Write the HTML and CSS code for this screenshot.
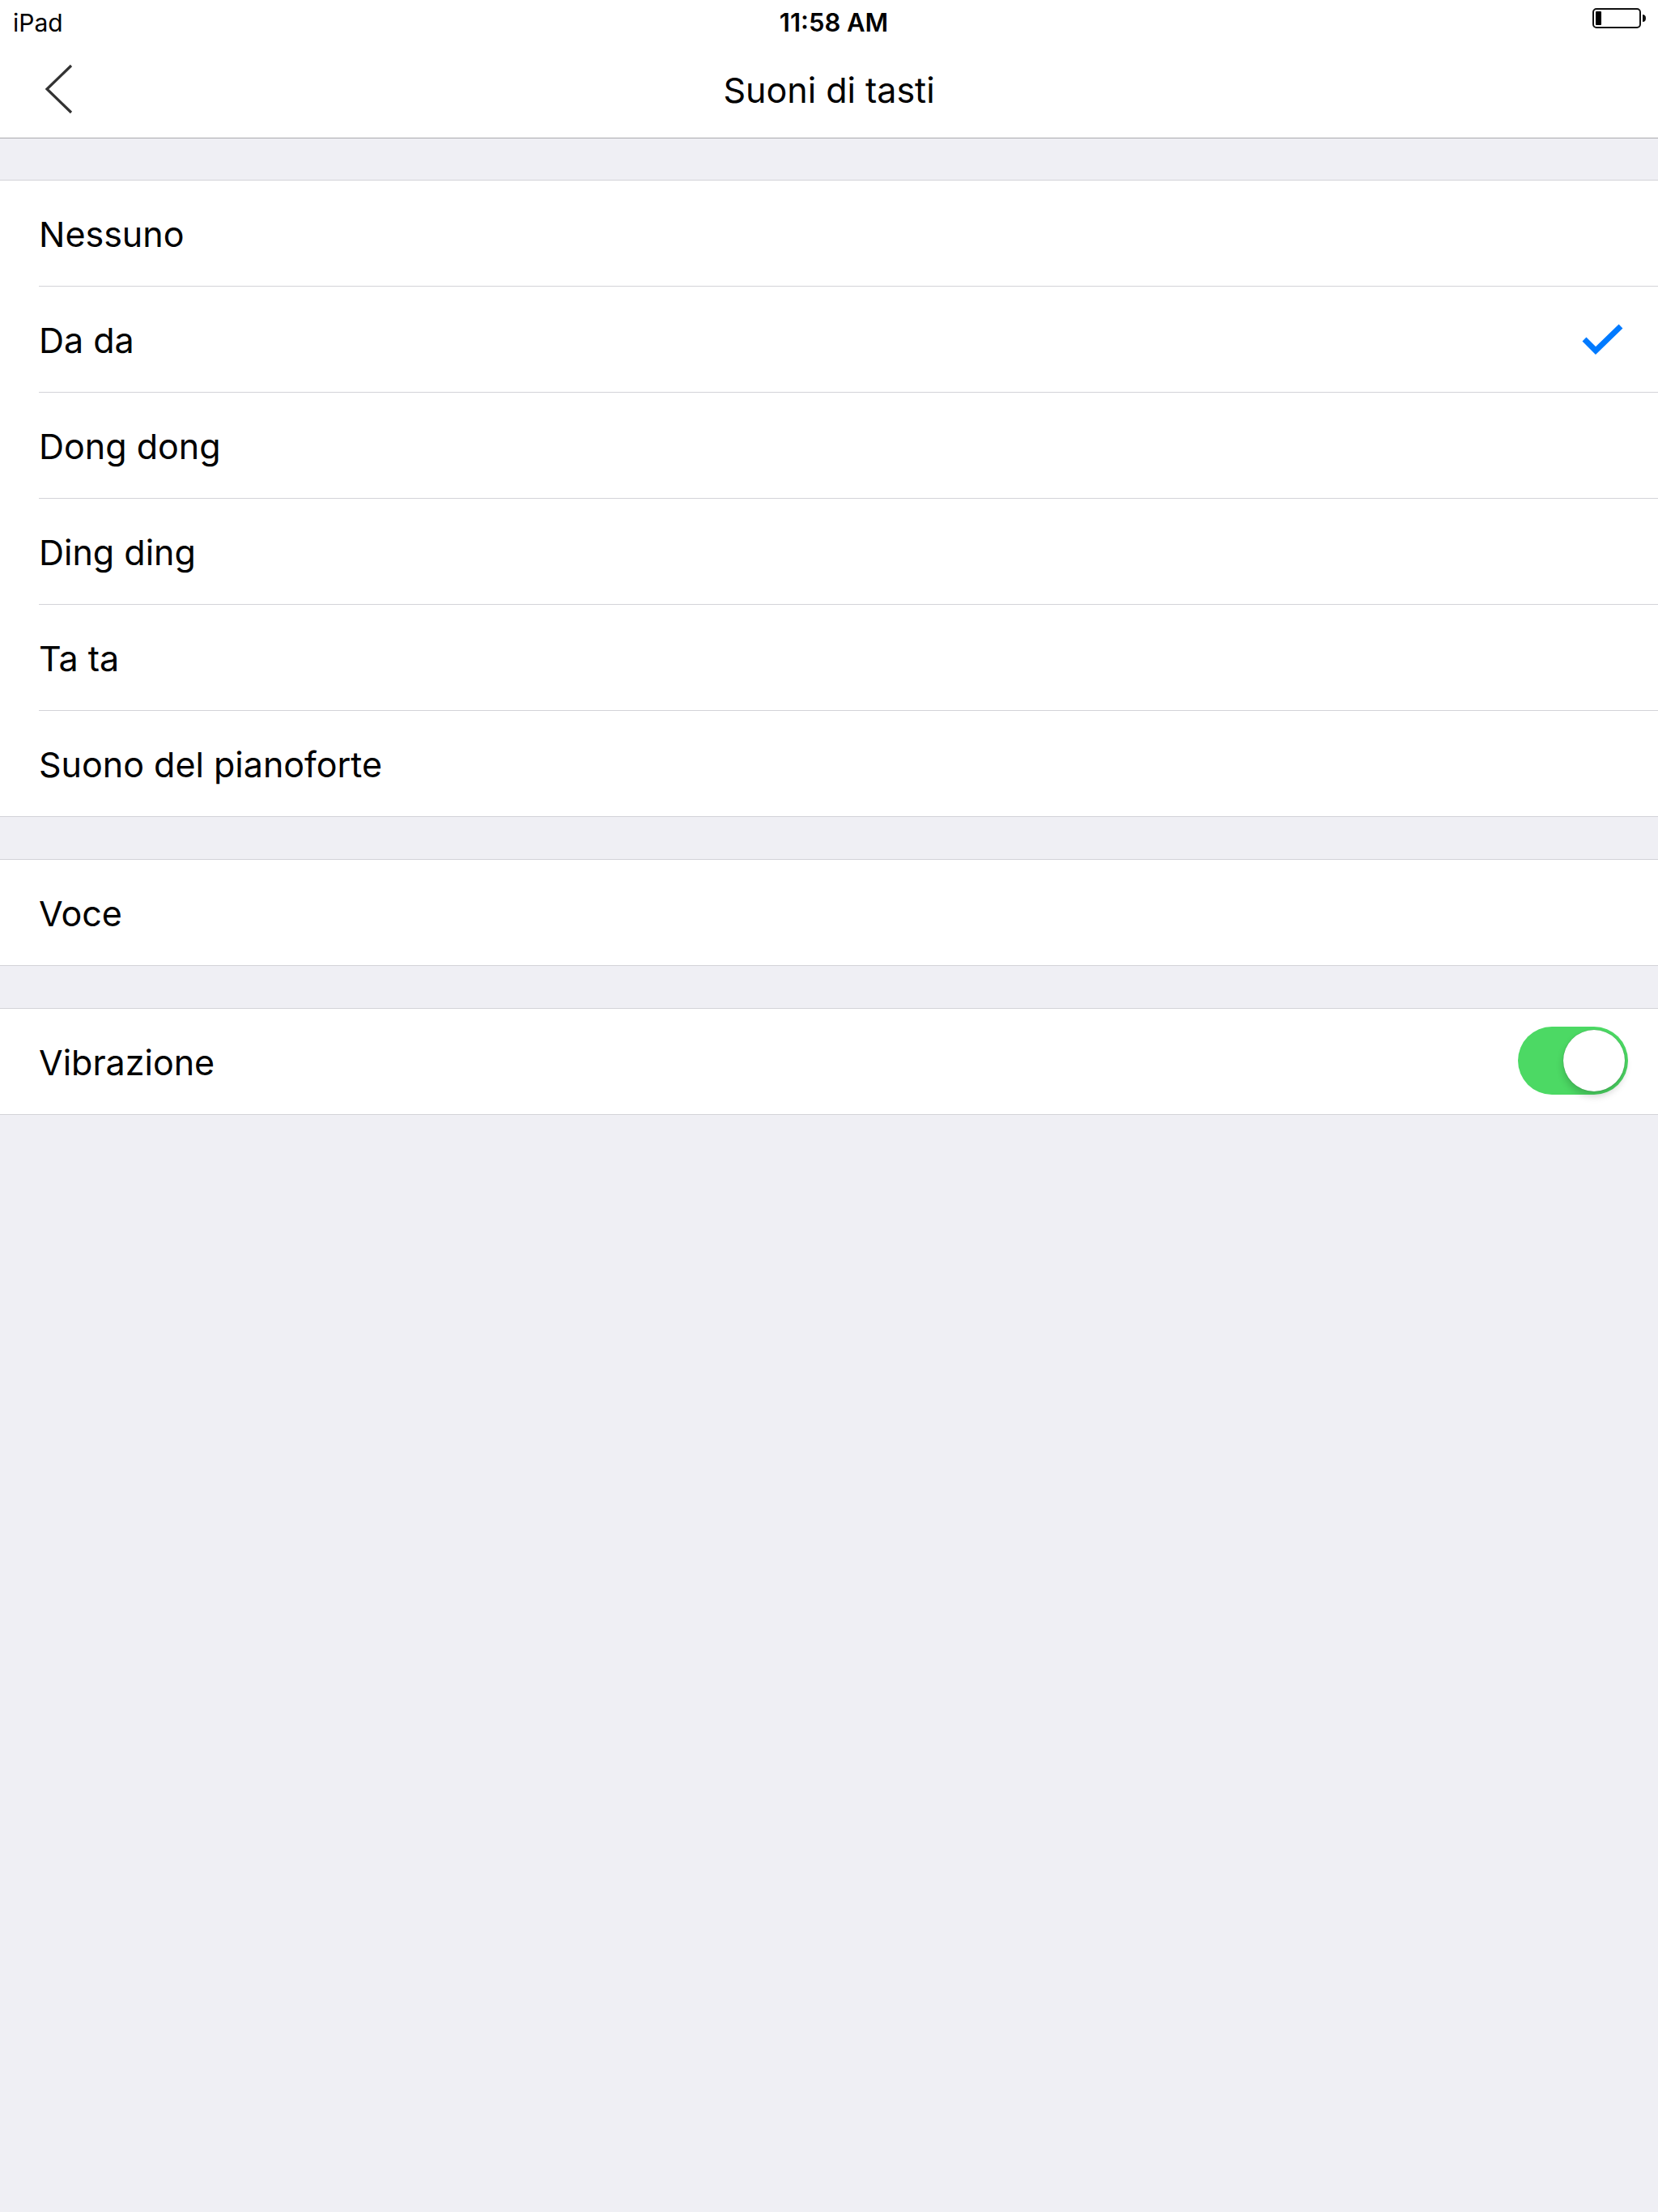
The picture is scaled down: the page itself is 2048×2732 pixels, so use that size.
FILE: index.html
```html
<!DOCTYPE html>
<html lang="it">
<head>
  <meta charset="UTF-8">
  <meta name="viewport" content="width=device-width, initial-scale=1.0">
  <title>Suoni di tasti</title>
  <link rel="stylesheet" href="styles.css">
</head>
<body>

  <div class="status-bar">
    <span class="device">iPad</span>
    <span class="clock">11:58 AM</span>
    <svg class="battery" width="70" height="30" viewBox="0 0 70 30">
      <rect x="2" y="3" width="58" height="23" rx="4" fill="none" stroke="#111" stroke-width="2"/>
      <rect x="5" y="6" width="7" height="17" rx="1" fill="#000"/>
      <path d="M63 10 Q67 10 67 14.5 Q67 19 63 19 Z" fill="#111"/>
    </svg>
  </div>

  <div class="nav-bar">
    <button class="back">
      <svg width="40" height="70" viewBox="0 0 40 70">
        <polyline points="35,8 5,37 35,66" fill="none" stroke="#333" stroke-width="3.2"/>
      </svg>
    </button>
    <h1 class="nav-title">Suoni di tasti</h1>
  </div>

  <div class="section">
    <div class="row"><div class="row-inner">Nessuno</div></div>
    <div class="row">
      <div class="row-inner">
        Da da
        <svg class="check" width="56" height="44" viewBox="0 0 56 44">
          <polyline points="5,22 19,36 50,6" fill="none" stroke="#007aff" stroke-width="7"/>
        </svg>
      </div>
    </div>
    <div class="row"><div class="row-inner">Dong dong</div></div>
    <div class="row"><div class="row-inner">Ding ding</div></div>
    <div class="row"><div class="row-inner">Ta ta</div></div>
    <div class="row"><div class="row-inner">Suono del pianoforte</div></div>
  </div>

  <div class="section">
    <div class="row"><div class="row-inner">Voce</div></div>
  </div>

  <div class="section">
    <div class="row">
      <div class="row-inner toggle-row">
        Vibrazione
        <span class="switch on"><span class="knob"></span></span>
      </div>
    </div>
  </div>

</body>
</html>
```

FILE: styles.css
```css
body {
  margin: 0;
  padding: 0;
  background-color: #efeff4;
  font-family: Inter, "Liberation Sans", Arial, sans-serif;
  color: #000;
  min-height: 2732px;
}

.status-bar {
  height: 40px;
  background-color: #fff;
  display: grid;
  grid-template-columns: 1fr auto 1fr;
  align-items: center;
  padding: 9px 12px 0 16px;
  box-sizing: border-box;
}

.device {
  font-size: 30px;
}

.clock {
  font-size: 31px;
  font-weight: 600;
  padding-left: 8px;
}

.battery {
  justify-self: end;
  margin-top: -9px;
}

.nav-bar {
  height: 130px;
  background-color: #fff;
  border-bottom: 1px solid #a9a9ae;
  display: flex;
  align-items: center;
  position: relative;
}

.back {
  border: none;
  background: none;
  padding: 0 0 0 53px;
  margin-top: 6px;
  display: flex;
  cursor: pointer;
}

.nav-title {
  position: absolute;
  left: 0;
  right: 0;
  margin: 0;
  padding-top: 12px;
  text-align: center;
  font-size: 43px;
  font-weight: 400;
  pointer-events: none;
}

.section {
  background-color: #fff;
  border-top: 1px solid #d3d3d8;
  border-bottom: 1px solid #d3d3d8;
  margin-top: 52px;
}

.nav-bar + .section {
  margin-top: 51px;
}

.row {
  padding-left: 48px;
}

.row-inner {
  height: 130px;
  display: flex;
  align-items: center;
  justify-content: space-between;
  padding-right: 40px;
  padding-top: 2px;
  box-sizing: border-box;
  font-size: 43px;
  border-bottom: 1px solid #d3d3d8;
}

.row:last-child .row-inner {
  border-bottom: none;
}

.row:not(:last-child) .row-inner {
  height: 131px;
}

.check {
  margin-top: -2px;
}

.toggle-row {
  padding-right: 37px;
}

.switch {
  width: 136px;
  height: 84px;
  border-radius: 42px;
  background-color: #e5e5ea;
  display: flex;
  align-items: center;
  padding: 0 4px;
  box-sizing: border-box;
  margin-top: -4px;
}

.switch.on {
  background-color: #4cd964;
  justify-content: flex-end;
}

.knob {
  width: 76px;
  height: 76px;
  border-radius: 50%;
  background-color: #fff;
  box-shadow: 0 6px 10px rgba(0, 0, 0, 0.18), 0 0 1px rgba(0, 0, 0, 0.35);
}
```
